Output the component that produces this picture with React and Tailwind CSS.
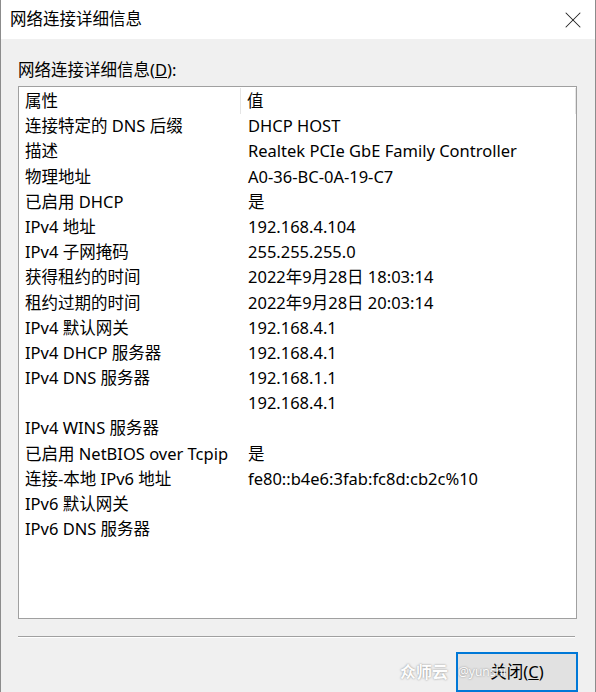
import { X } from "lucide-react";

const ROWS = [
  ["连接特定的 DNS 后缀", "DHCP HOST"],
  ["描述", "Realtek PCIe GbE Family Controller"],
  ["物理地址", "A0-36-BC-0A-19-C7"],
  ["已启用 DHCP", "是"],
  ["IPv4 地址", "192.168.4.104"],
  ["IPv4 子网掩码", "255.255.255.0"],
  ["获得租约的时间", "2022年9月28日 18:03:14"],
  ["租约过期的时间", "2022年9月28日 20:03:14"],
  ["IPv4 默认网关", "192.168.4.1"],
  ["IPv4 DHCP 服务器", "192.168.4.1"],
  ["IPv4 DNS 服务器", "192.168.1.1"],
  ["", "192.168.4.1"],
  ["IPv4 WINS 服务器", ""],
  ["已启用 NetBIOS over Tcpip", "是"],
  ["连接-本地 IPv6 地址", "fe80::b4e6:3fab:fc8d:cb2c%10"],
  ["IPv6 默认网关", ""],
  ["IPv6 DNS 服务器", ""],
];

const FONT = "font-['Noto_Sans','Noto_Sans_CJK_SC',sans-serif]";

export default function App() {
  return (
    <div
      className={`relative w-[596px] h-[692px] overflow-hidden bg-[#f0f0f0] border-l border-r border-[#8c8c8c] text-[16.5px] text-black ${FONT}`}
    >
      {/* Title bar */}
      <div className="h-[39px] bg-white flex items-center justify-between pl-[9px] pr-[8px]">
        <span className="leading-none">网络连接详细信息</span>
        <X className="h-[28px] w-[28px] text-[#222]" strokeWidth={0.9} />
      </div>

      <div className="px-[17px]">
        <p className="mt-[19px] h-[28px] leading-[24px]">
          网络连接详细信息(<span className="underline">D</span>):
        </p>

        {/* List */}
        <div className="w-[559px] h-[533px] bg-white border border-[#a0a0a0] pt-[1px]">
          <div className="flex h-[26px] items-center">
            <div className="w-[222px] h-full flex items-center pl-[6px] border-r border-[#e5e5e5]">
              属性
            </div>
            <div className="flex-1 h-full flex items-center pl-[6px] border-r border-[#e5e5e5]">
              值
            </div>
          </div>
          {ROWS.map(([k, v], i) => (
            <div key={i} className="flex h-[25.2px] items-center whitespace-nowrap">
              <div className="w-[223px] pl-[6px]">{k}</div>
              <div className="flex-1 pl-[6px]">{v}</div>
            </div>
          ))}
        </div>

        {/* Separator */}
        <div className="mt-[17px] w-[557px] border-t border-[#a0a0a0] border-b border-b-white" />

        <div className="flex justify-end mt-[14px]">
          <button className="w-[122px] h-[40px] bg-[#e1e1e1] border-2 border-[#0078d7] flex items-center justify-center">
            关闭(<span className="underline">C</span>)
          </button>
        </div>
      </div>

      {/* Watermark */}
      <div className="absolute left-[399px] top-[660px] flex items-center gap-[10px] text-[16px] text-white [text-shadow:0_0_2px_#777] opacity-90">
        <span className="font-bold">众师云</span>
        <span className="text-[12px]">@yunshi</span>
      </div>
    </div>
  );
}
